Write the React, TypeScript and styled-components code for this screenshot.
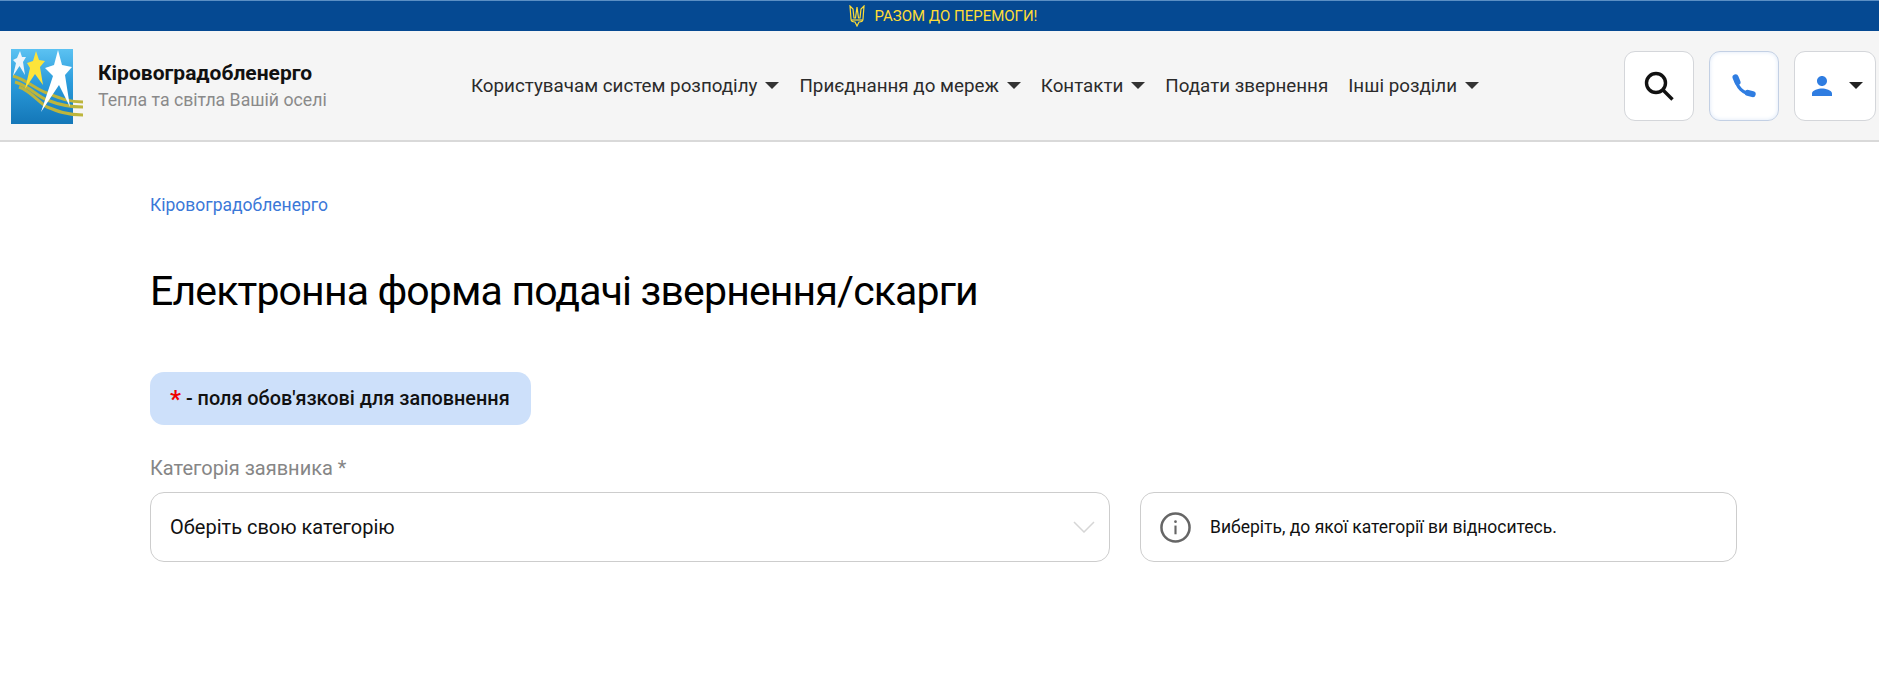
import React from "react"
import styled, { createGlobalStyle } from "styled-components"

const GlobalStyle = createGlobalStyle`
    html, body {
        margin: 0;
        padding: 0;
        background: #fff;
        font-family: Roboto, "Liberation Sans", sans-serif;
        color: #000;
    }
`
const Banner = styled.div`
    height: 31px;
    box-sizing: border-box;
    border-top: 1px solid #5b8fc4;
    background: #054992;
    color: #ffdd35;
    font-size: 15px;
    display: flex;
    align-items: center;
    justify-content: center;
    gap: 10px;
    padding-left: 7px;
    text-transform: uppercase;
`
const Header = styled.header`
    height: 111px;
    box-sizing: border-box;
    background: #f5f5f5;
    border-bottom: 2px solid #d9d9d9;
    display: flex;
    align-items: center;
    padding: 2px 3px 0 11px;
`
const Brand = styled.div`
    width: 460px;
    flex: none;
    display: flex;
    align-items: center;
    gap: 15px;
`
const BrandText = styled.div`
    display: flex;
    flex-direction: column;
    gap: 5px;
    margin-top: -1px;
`
const BrandName = styled.div`
    font-weight: 700;
    font-size: 21px;
    line-height: 24px;
    color: #111;
`
const BrandSlogan = styled.div`
    font-size: 17.7px;
    line-height: 21px;
    color: #8a8a8a;
`
const Nav = styled.nav`
    flex: 1;
    display: flex;
    align-items: center;
    gap: 20px;
    margin-top: -2px;
`
const NavItem = styled.a`
    display: flex;
    align-items: center;
    gap: 8px;
    font-size: 18.8px;
    color: #2b2b2b;
`
const Caret = styled.span<{ $color?: string }>`
    width: 0;
    height: 0;
    border-left: 7px solid transparent;
    border-right: 7px solid transparent;
    border-top: 7px solid ${(p) => p.$color || "#333"};
`
const Actions = styled.div`
    display: flex;
    gap: 15px;
    margin-top: -2px;
`
const IconButton = styled.button<{ $wide?: boolean; $active?: boolean }>`
    width: ${(p) => (p.$wide ? "82px" : "70px")};
    height: 70px;
    padding: 0;
    box-sizing: border-box;
    background: #fff;
    border: 1px solid ${(p) => (p.$active ? "#c3d0e4" : "#d4d6da")};
    box-shadow: ${(p) => (p.$active ? "inset 0 0 4px #dbe7f8" : "none")};
    border-radius: 11px;
    display: flex;
    align-items: center;
    justify-content: center;
    gap: 12px;
`
const Main = styled.main`
    padding: 53px 142px 0 150px;
`
const Breadcrumb = styled.a`
    display: block;
    font-size: 17.5px;
    line-height: 20px;
    color: #3b78d8;
`
const Title = styled.h1`
    margin: 51px 0 0;
    font-family: Roboto, sans-serif;
    font-weight: 450;
    font-size: 41px;
    line-height: 50px;
    letter-spacing: -0.85px;
    color: #000;
`
const Notice = styled.div`
    margin-top: 56px;
    width: fit-content;
    height: 53px;
    padding: 0 21px 0 20px;
    box-sizing: border-box;
    display: flex;
    align-items: center;
    gap: 5px;
    background: #cde0fa;
    border-radius: 14px;
    font-size: 19.85px;
    font-weight: 500;
    color: #111;
`
const Star = styled.span`
    color: #f00000;
    font-size: 24px;
    font-weight: 700;
    line-height: 18px;
`
const FieldLabel = styled.label`
    display: block;
    margin-top: 32px;
    font-size: 20px;
    line-height: 22px;
    color: #868686;
`
const FieldRow = styled.div`
    margin-top: 13px;
    display: grid;
    grid-template-columns: 960px 597px;
    gap: 30px;
`
const SelectBox = styled.div`
    height: 70px;
    box-sizing: border-box;
    border: 1px solid #cdcdcd;
    border-radius: 14px;
    padding: 0 14px 0 19px;
    display: flex;
    align-items: center;
    justify-content: space-between;
    font-size: 20px;
    color: #111;
`
const HintBox = styled.div`
    height: 70px;
    box-sizing: border-box;
    border: 1px solid #cdcdcd;
    border-radius: 14px;
    padding: 0 20px 0 19px;
    display: flex;
    align-items: center;
    gap: 19px;
    font-size: 17.5px;
    color: #111;
`

const Logo = () => (
    <svg width="72" height="75" viewBox="0 0 72 75">
        <defs>
            <linearGradient id="logoBg" x1="0" y1="0" x2="0" y2="1">
                <stop offset="0" stopColor="#5cc2f2" />
                <stop offset="0.45" stopColor="#2a9bdb" />
                <stop offset="1" stopColor="#1477b8" />
            </linearGradient>
        </defs>
        <rect width="62" height="75" fill="url(#logoBg)" />
        <g fill="none" stroke="#bdb53c" strokeWidth="3">
            <path d="M2 27 C16 31 24 40 36 44 C46 48 56 53 72 53" />
            <path d="M4 33 C18 37 26 47 36 51 C46 55 56 58 72 58" />
            <path d="M8 38 C20 42 28 54 36 58 C46 62 56 66 72 66" />
        </g>
        <path d="M9 2 L11 8 L15 8 L12 13 L14 26 L8.5 17 L2 27 L5 14 L2 11 L6 9 Z" fill="#eef4fa" />
        <path d="M25 2 L28 11 L34 12 L29 18 L32 36 L24 25 L14 40 L19 19 L16 14 L22 12 Z" fill="#fde43a" />
        <path d="M47 1 L51 16 L61 18 L54 26 L59 58 L48 36 L30 63 L42 27 L34 19 L43 16 Z" fill="#fff" />
    </svg>
)

const Trident = () => (
    <svg width="16" height="22" viewBox="0 0 16 22" fill="none" stroke="#ffdd35" strokeWidth="1.2">
        <path d="M1 1 L2 14 Q2 17 6 17 L8 21 L10 17 Q14 17 14 14 L15 1 L12 4 L11 13 L9.5 13 L8 2 L6.5 13 L5 13 L4 4 Z" />
        <path d="M2.5 15 H13.5" />
    </svg>
)

const SearchIcon = () => (
    <svg width="30" height="30" viewBox="0 0 30 30" fill="none" stroke="#111" strokeWidth="3.4">
        <circle cx="12" cy="12" r="9.5" />
        <path d="M19 19 L28.5 28.5" />
    </svg>
)

const PhoneIcon = () => (
    <svg width="26" height="26" viewBox="0 0 24 24" fill="none" stroke="#2f7de1" strokeLinecap="round">
        <path d="M4.5 5 C5 13 11 19 19.5 19.5" strokeWidth="3" />
        <path d="M4.2 4 L6 8.5" strokeWidth="5.6" />
        <path d="M15.5 18.3 L20 19.5" strokeWidth="5.6" />
    </svg>
)

const UserIcon = () => (
    <svg width="30" height="30" viewBox="0 0 24 24" fill="#2f7de1">
        <path d="M12 12c2.21 0 4-1.79 4-4s-1.79-4-4-4-4 1.79-4 4 1.79 4 4 4zm0 2c-2.67 0-8 1.34-8 4v2h16v-2c0-2.66-5.33-4-8-4z" />
    </svg>
)

const ChevronIcon = () => (
    <svg width="22" height="12" viewBox="0 0 22 12" fill="none" stroke="#d6d6d6" strokeWidth="1.5">
        <path d="M1 1 L11 11 L21 1" />
    </svg>
)

const InfoIcon = () => (
    <svg width="31" height="31" viewBox="0 0 32 32" fill="none">
        <circle cx="16" cy="16" r="14.5" stroke="#666" strokeWidth="2.6" />
        <path d="M16 14 V23" stroke="#666" strokeWidth="2.2" />
        <circle cx="16" cy="10" r="1.4" fill="#666" />
    </svg>
)

const navItems = [
    { label: "Користувачам систем розподілу", caret: true },
    { label: "Приєднання до мереж", caret: true },
    { label: "Контакти", caret: true },
    { label: "Подати звернення", caret: false },
    { label: "Інші розділи", caret: true },
]

const App = () => {
    return (
        <>
            <GlobalStyle />
            <Banner>
                <Trident />
                Разом до перемоги!
            </Banner>
            <Header>
                <Brand>
                    <Logo />
                    <BrandText>
                        <BrandName>Кіровоградобленерго</BrandName>
                        <BrandSlogan>Тепла та світла Вашій оселі</BrandSlogan>
                    </BrandText>
                </Brand>
                <Nav>
                    {navItems.map((item) => (
                        <NavItem key={item.label}>
                            {item.label}
                            {item.caret && <Caret />}
                        </NavItem>
                    ))}
                </Nav>
                <Actions>
                    <IconButton><SearchIcon /></IconButton>
                    <IconButton $active><PhoneIcon /></IconButton>
                    <IconButton $wide>
                        <UserIcon />
                        <Caret $color="#222" />
                    </IconButton>
                </Actions>
            </Header>
            <Main>
                <Breadcrumb>Кіровоградобленерго</Breadcrumb>
                <Title>Електронна форма подачі звернення/скарги</Title>
                <Notice><Star>*</Star> - поля обов'язкові для заповнення</Notice>
                <FieldLabel>Категорія заявника *</FieldLabel>
                <FieldRow>
                    <SelectBox>
                        Оберіть свою категорію
                        <ChevronIcon />
                    </SelectBox>
                    <HintBox>
                        <InfoIcon />
                        Виберіть, до якої категорії ви відноситесь.
                    </HintBox>
                </FieldRow>
            </Main>
        </>
    )
}

export default App
